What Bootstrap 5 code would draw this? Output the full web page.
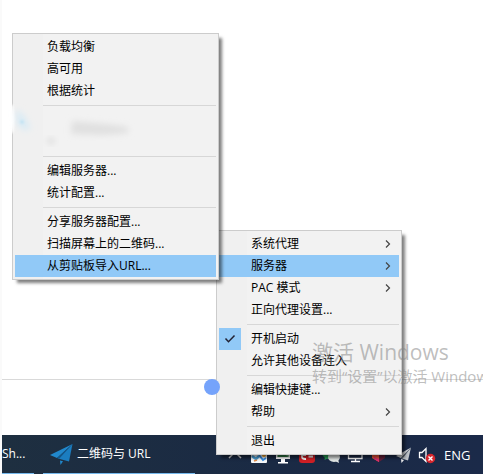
<!DOCTYPE html>
<html lang="zh-CN">
<head>
<meta charset="utf-8">
<meta name="viewport" content="width=device-width, initial-scale=1">
<title>二维码与 URL</title>
<link href="https://cdn.jsdelivr.net/npm/bootstrap@5.3.0/dist/css/bootstrap.min.css" rel="stylesheet">
<style>
body{font-family:"Open Sans","Noto Sans CJK SC",sans-serif;font-size:12px;line-height:22px;color:#000;background:#fff}
.desktop{border-left:2px solid #fafafa}
.page-rule{height:1px;background:#d9d9d9;margin-bottom:55px}
.handle{width:16px;height:16px;background:#75a3fb;left:202px;bottom:79px;z-index:4}
.popup{background:linear-gradient(to right,#f0f0f0 30px,#f2f2f2 30px);border:1px solid #ccc;padding:2px;box-shadow:4px 4px 3px -1px rgba(0,0,0,.5)}
.popup-servers{left:10px;top:33px;width:207px;z-index:3}
.popup-main{left:214px;bottom:19px;width:186px;z-index:2}
.entry{height:22px;padding:0 8px 0 32px;border:0;background:none;color:#000;text-align:left;white-space:nowrap}
.entry:hover,.entry.current{background:#91c9f7}
.tick{left:0;top:0;width:22px;height:22px;background:#91c9f7}
.divider{height:1px;margin:3px 0 3px 28px;background:#d7d7d7;border:0;opacity:1}
.redacted{height:44px}
.smear{left:-14px;top:-10px}
.activate{left:310px;top:338px;z-index:4;color:rgba(135,135,135,.55);white-space:nowrap;pointer-events:none}
.activate-title{font-size:21px;line-height:28px}
.activate-note{font-size:15px;line-height:20px}
.taskbar{height:39px;background:linear-gradient(to right,#1e2f40,#1a2a44 55%,#1b2a49);color:#fff}
.task{height:39px;border:0;border-bottom:1px solid #76b9ed;background:none;color:#fff;padding:0;white-space:nowrap}
.task-first{width:32px}
.task-app{width:152px;padding-left:7px;margin-left:9px}
.tray-btn{width:24px;height:39px;border:0;background:none;padding:0;line-height:0}
.lang{width:44px;height:39px;border:0;background:none;color:#fff;font-size:13px;padding:0 0 0 5px;text-align:left}
</style>
<script src="https://cdn.jsdelivr.net/npm/bootstrap@5.3.0/dist/js/bootstrap.bundle.min.js"></script>
</head>
<body>
<main class="desktop position-relative d-flex flex-column justify-content-end min-vh-100 overflow-hidden">
  <div class="page-rule"></div>
  <span class="handle rounded-circle position-absolute"></span>

  <div class="popup popup-servers position-absolute d-flex flex-column" role="menu" aria-label="服务器">
    <button class="entry" role="menuitem">负载均衡</button>
    <button class="entry" role="menuitem">高可用</button>
    <button class="entry" role="menuitem">根据统计</button>
    <hr class="divider">
    <div class="redacted position-relative">
      <svg class="smear position-absolute" width="200" height="56" viewBox="0 0 200 56" aria-hidden="true">
        <defs>
          <filter id="soft" x="-50%" y="-50%" width="200%" height="200%"><feGaussianBlur stdDeviation="3"/></filter>
          <filter id="edge" x="-50%" y="-50%" width="200%" height="200%"><feGaussianBlur stdDeviation="1"/></filter>
        </defs>
        <path d="M6 6h6l1 6 1 8-1 8-1 6H6z" fill="#fff" filter="url(#edge)"/>
        <path d="M15 11l6 3 5 8 4 8-8 1-6-6z" fill="#d9ebf5" filter="url(#soft)"/>
        <circle cx="21" cy="23" r="2" fill="#c3e3f4" filter="url(#edge)"/>
        <path d="M71 22l34 3 22 3v6l-24 2-33-1z" fill="#e0e0e0" filter="url(#soft)"/>
        <path d="M72 21h6" stroke="#ccc" filter="url(#edge)"/>
        <ellipse cx="50" cy="42" rx="4" ry="3" fill="#dcdcdc" filter="url(#soft)"/>
      </svg>
    </div>
    <hr class="divider">
    <button class="entry" role="menuitem">编辑服务器...</button>
    <button class="entry" role="menuitem">统计配置...</button>
    <hr class="divider">
    <button class="entry" role="menuitem">分享服务器配置...</button>
    <button class="entry" role="menuitem">扫描屏幕上的二维码...</button>
    <button class="entry current" role="menuitem">从剪贴板导入URL...</button>
  </div>

  <div class="popup popup-main position-absolute d-flex flex-column" role="menu" aria-label="主菜单">
    <button class="entry d-flex justify-content-between align-items-center" role="menuitem">系统代理<svg width="6" height="10" viewBox="0 0 6 10" fill="none" stroke="#444" stroke-width="1.2" aria-hidden="true"><path d="M1 1.5 4.5 5 1 8.5"/></svg></button>
    <button class="entry current d-flex justify-content-between align-items-center" role="menuitem">服务器<svg width="6" height="10" viewBox="0 0 6 10" fill="none" stroke="#444" stroke-width="1.2" aria-hidden="true"><path d="M1 1.5 4.5 5 1 8.5"/></svg></button>
    <button class="entry d-flex justify-content-between align-items-center" role="menuitem">PAC 模式<svg width="6" height="10" viewBox="0 0 6 10" fill="none" stroke="#444" stroke-width="1.2" aria-hidden="true"><path d="M1 1.5 4.5 5 1 8.5"/></svg></button>
    <button class="entry" role="menuitem">正向代理设置...</button>
    <hr class="divider">
    <button class="entry position-relative" role="menuitemcheckbox" aria-checked="true"><svg class="tick position-absolute" viewBox="0 0 22 22" fill="none" stroke="#223" stroke-width="1.5" aria-hidden="true"><path d="M6.5 10.5l3 3.2 6-6.2"/></svg>开机启动</button>
    <button class="entry" role="menuitemcheckbox" aria-checked="false">允许其他设备连入</button>
    <hr class="divider">
    <button class="entry" role="menuitem">编辑快捷键...</button>
    <button class="entry d-flex justify-content-between align-items-center" role="menuitem">帮助<svg width="6" height="10" viewBox="0 0 6 10" fill="none" stroke="#444" stroke-width="1.2" aria-hidden="true"><path d="M1 1.5 4.5 5 1 8.5"/></svg></button>
    <hr class="divider">
    <button class="entry" role="menuitem">退出</button>
  </div>

  <div class="activate position-absolute">
    <div class="activate-title">激活 Windows</div>
    <div class="activate-note">转到“设置”以激活 Windows</div>
  </div>

  <footer class="taskbar d-flex flex-shrink-0">
    <button class="task task-first text-start">Sh...</button>
    <button class="task task-app d-flex align-items-center">
      <svg class="me-1" width="23" height="22" viewBox="0 0 23 22" aria-hidden="true"><path d="M22.500 1 0 12l7 3z" fill="#2188cc"/><path d="M22.500 1 8 15.500l11 3z" fill="#1b7dc0"/><path d="M22.500 1 7 15l2 1z" fill="#14578a"/><path d="M10 17.500l3 .8-2.500 3.700z" fill="#2188cc"/></svg>二维码与 URL</button>
    <div class="d-flex ms-auto">
      <button class="tray-btn" aria-label="显示隐藏的图标"><svg width="24" height="24" viewBox="0 0 24 24" fill="none" stroke="#ddd" stroke-width="1.5"><path d="M6 15l6-6 6 6"/></svg></button>
      <button class="tray-btn" aria-label="地图"><svg width="24" height="24" viewBox="0 0 24 24"><rect x="4" y="4" width="16" height="16" rx="1" fill="#f5f8fa"/><path d="M5 13l4 3 3-3" stroke="#4ba4dd" stroke-width="2.500" fill="none"/><path d="M12 12l4 5 3-2" stroke="#358ee5" stroke-width="2" fill="none"/><circle cx="17" cy="12" r="2" fill="#f5a52b"/><path d="M7 18l3-1" stroke="#e38b47" stroke-width="1.500"/></svg></button>
      <button class="tray-btn" aria-label="显示器"><svg width="24" height="24" viewBox="0 0 24 24"><path d="M5 4h14v12H5z" fill="#fff"/><path d="M6.500 6h11v8h-11z" fill="#2d7541"/><path d="M9 7l8 7V6z" fill="#58a56c"/><path d="M10 16h4v3h3v1.500H7V19h3z" fill="#fff"/></svg></button>
      <button class="tray-btn" aria-label="红色应用"><svg width="24" height="24" viewBox="0 0 24 24"><rect x="4" y="4" width="16" height="16" rx="3" fill="#cf1f25"/><path d="M7 7v7q0 2 4 2M7 12h4M13.500 13.500h4.500" fill="none" stroke="#fff" stroke-width="1.800"/></svg></button>
      <button class="tray-btn" aria-label="微信"><svg width="24" height="24" viewBox="0 0 24 24"><ellipse cx="10" cy="10" rx="7" ry="6" fill="#279c55"/><path d="M6 14l-.5 3 4-2z" fill="#279c55"/><ellipse cx="15" cy="14" rx="6" ry="5" fill="#e2e7e5"/><path d="M16 18l4 2-1-4z" fill="#e2e7e5"/></svg></button>
      <button class="tray-btn" aria-label="网络"><svg width="24" height="24" viewBox="0 0 24 24" fill="none" stroke="#fff" stroke-width="1.300"><path d="M8 6h11v9.500H5.500V10M12.500 15.500v3M8 18.500h9M6 6v4M4 10h4"/></svg></button>
      <button class="tray-btn" aria-label="工具箱"><svg width="24" height="24" viewBox="0 0 24 24"><path d="M12 3l6 3-6 4-6-4z" fill="#f6a53d"/><path d="M5 7l7 4v8l-7-4z" fill="#f0553b"/><path d="M18 7l-6 4v8l6-4z" fill="#622039"/><path d="M7 14l5 2v3l-5-3z" fill="#d62f70"/></svg></button>
      <button class="tray-btn" aria-label="代理"><svg width="24" height="24" viewBox="0 0 24 24"><path d="M20 4.500 5 13l5 2z" fill="#d5d8db"/><path d="M20 4.500 11 15.500l6 2z" fill="#bfc4c9"/><path d="M10 16l3 1-2.500 3z" fill="#eee"/><path d="M20 4.500 10 15l1 1z" fill="#636c78"/></svg></button>
      <button class="tray-btn" aria-label="音量"><svg width="24" height="24" viewBox="0 0 24 24"><path d="M4.500 9.500h2.500l4-4v13l-4-4H4.500z" fill="none" stroke="#fff" stroke-width="1.300"/><circle cx="15.500" cy="15.500" r="4.700" fill="#d7262d"/><path d="M13.500 13.500l4 4M17.500 13.500l-4 4" stroke="#fff" stroke-width="1.400"/></svg></button>
      <button class="lang">ENG</button>
    </div>
  </footer>
</main>
</body>
</html>
